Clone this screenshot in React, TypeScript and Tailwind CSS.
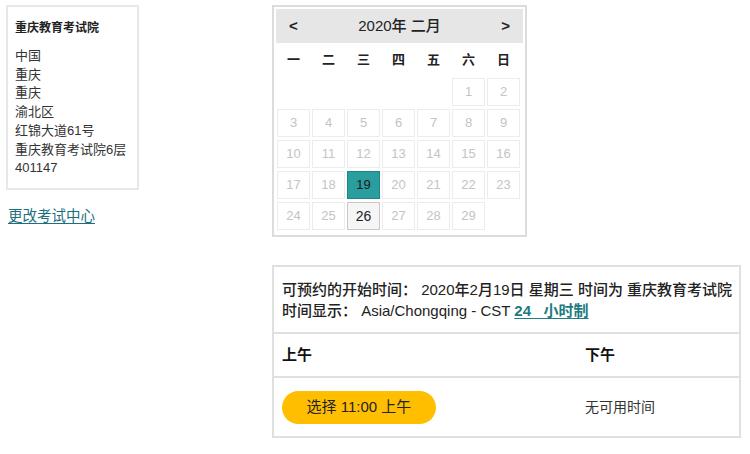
import React from "react";

const font = { fontFamily: '"Liberation Sans", "Noto Sans CJK SC", sans-serif' };

const days = ["一", "二", "三", "四", "五", "六", "日"];

function Cell({ d }: { d: number | null }) {
  if (d === null) return <div className="h-[28px]" />;
  if (d === 19)
    return (
      <div className="h-[28px] flex items-center justify-center bg-[#2a9d9f] border border-[#1f8486] text-[13px] text-[#1a1a1a]">
        {d}
      </div>
    );
  if (d === 26)
    return (
      <div className="h-[28px] flex items-center justify-center bg-[#f5f5f5] border border-[#c8c8c8] text-[14px] text-[#222]">
        {d}
      </div>
    );
  return (
    <div className="h-[28px] flex items-center justify-center border border-[#ececec] text-[13px] text-[#c4c4c4]">
      {d}
    </div>
  );
}

export default function App() {
  const cells: (number | null)[] = [null, null, null, null, null];
  for (let i = 1; i <= 29; i++) cells.push(i);

  return (
    <div className="w-[750px] h-[454px] bg-white flex text-[#333]" style={font}>
      <div className="ml-[6px] mt-[5px] w-[133px] shrink-0">
        <div className="border-2 border-[#e8e8e8] pl-[7px] pt-[12px] pb-[10px]">
          <div className="text-[12px] font-bold text-[#222] leading-[18px]">重庆教育考试院</div>
          <div className="mt-[10px] text-[13px] leading-[18.7px] text-[#333]">
            <div>中国</div>
            <div>重庆</div>
            <div>重庆</div>
            <div>渝北区</div>
            <div>红锦大道61号</div>
            <div>重庆教育考试院6层</div>
            <div>401147</div>
          </div>
        </div>
        <a className="block mt-[16px] ml-[2px] text-[14.5px] text-[#1c6f7e] underline underline-offset-2" href="#">
          更改考试中心
        </a>
      </div>

      <div className="ml-[133px] mt-[5px] flex flex-col">
        <div className="w-[255px] border-2 border-[#dcdcdc] px-[2px] pt-[2px] pb-[5px]">
          <div className="h-[34px] bg-[#e6e6e6] flex items-center justify-between px-[13px] text-[#222]">
            <span className="font-bold text-[15px]">&lt;</span>
            <span className="text-[15px] font-medium">2020年 二月</span>
            <span className="font-bold text-[15px]">&gt;</span>
          </div>
          <div className="grid grid-cols-7 gap-x-[2px] w-[243px] ml-[1px] h-[33px] items-center">
            {days.map((d) => (
              <div key={d} className="text-center text-[13px] font-bold text-[#222]">
                {d}
              </div>
            ))}
          </div>
          <div className="grid grid-cols-7 gap-x-[2px] gap-y-[3px] w-[243px] ml-[1px] mt-[2px]">
            {cells.map((d, i) => (
              <Cell key={i} d={d} />
            ))}
          </div>
        </div>

        <div className="mt-[28px] w-[469px] border-2 border-[#e0e0e0]">
          <div className="px-[8px] pt-[12px] pb-[11px] text-[15px] leading-[21px] font-medium text-[#222] border-b-2 border-[#e0e0e0] whitespace-nowrap">
            <div>可预约的开始时间： 2020年2月19日 星期三 时间为 重庆教育考试院</div>
            <div>
              时间显示： Asia/Chongqing - CST{" "}
              <a href="#" className="text-[#217a80] font-bold underline underline-offset-2">
                24&nbsp;&nbsp;&nbsp;小时制
              </a>
            </div>
          </div>
          <div className="flex h-[44px] items-center border-b-2 border-[#e0e0e0] text-[15px] font-bold text-[#111]">
            <div className="w-[311px] pl-[8px]">上午</div>
            <div>下午</div>
          </div>
          <div className="flex h-[58px] items-center">
            <div className="w-[311px] pl-[8px]">
              <button className="w-[154px] h-[33px] rounded-full bg-[#ffbf00] text-[15px] text-[#222]">
                选择 11:00 上午
              </button>
            </div>
            <div className="text-[14px] text-[#333]">无可用时间</div>
          </div>
        </div>
      </div>
    </div>
  );
}
